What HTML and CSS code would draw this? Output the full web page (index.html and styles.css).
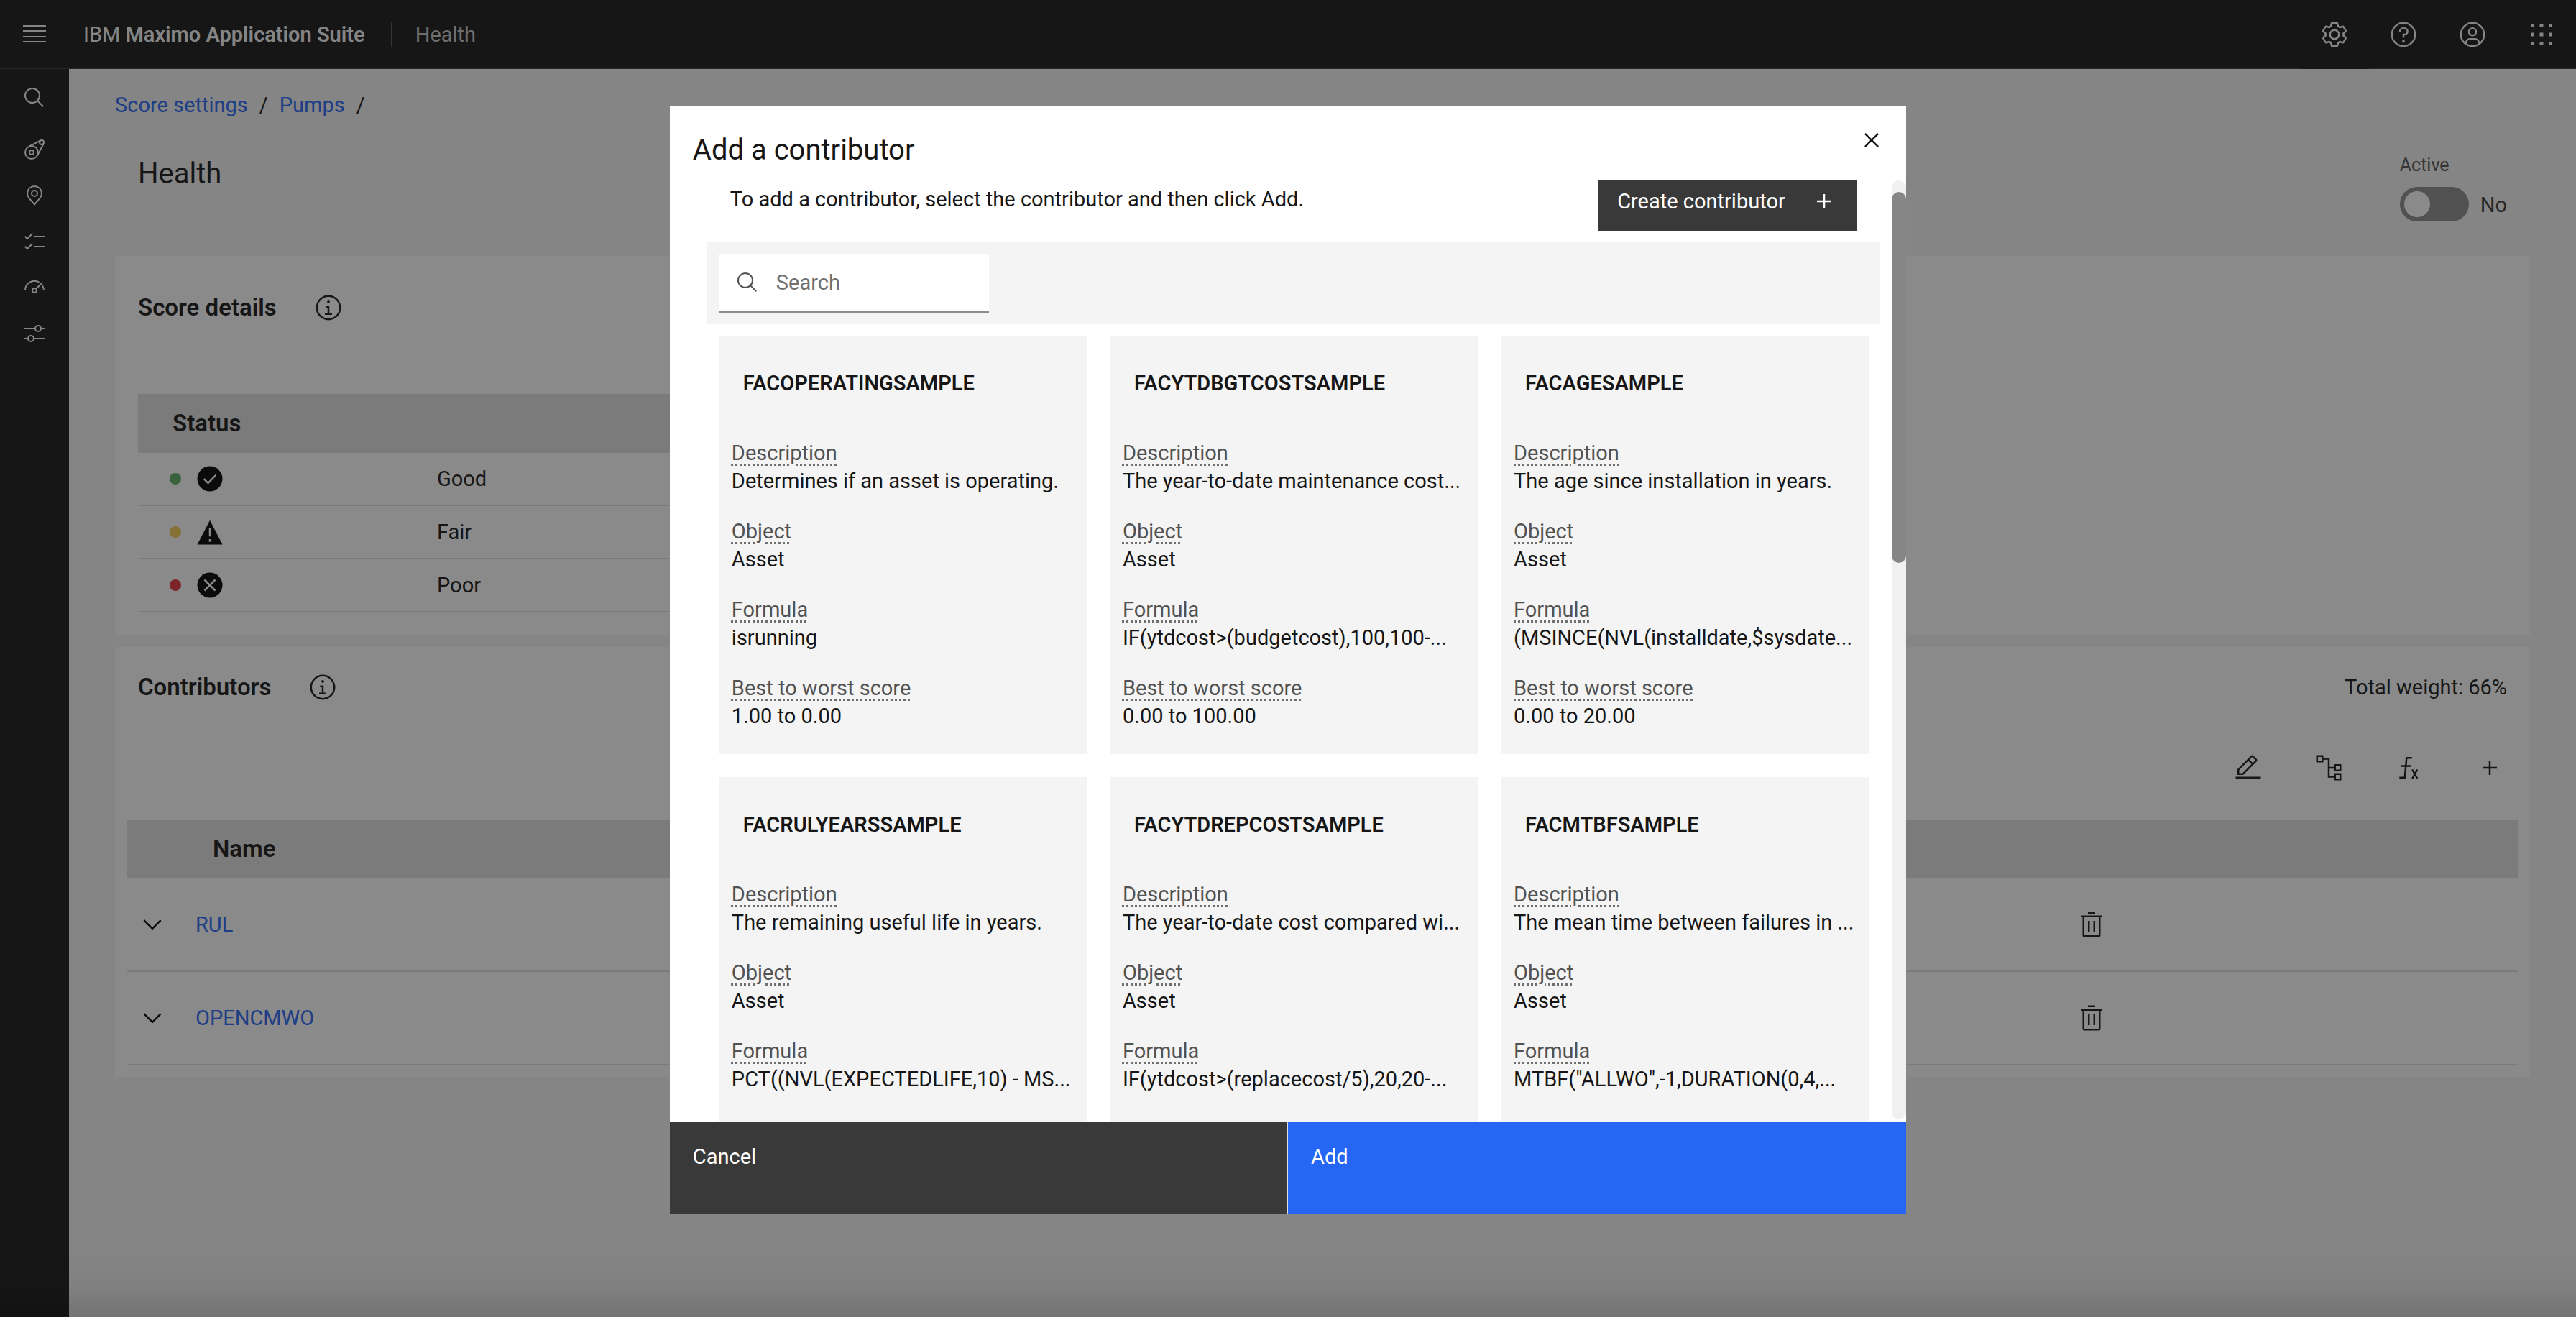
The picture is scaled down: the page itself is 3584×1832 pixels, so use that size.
FILE: index.html
```html
<!DOCTYPE html>
<html lang="en">
<head>
<meta charset="utf-8">
<meta name="viewport" content="width=device-width, initial-scale=1">
<title>Health - IBM Maximo Application Suite</title>
<link rel="stylesheet" href="styles.css">
</head>
<body>
<svg class="sprite" aria-hidden="true">
  <symbol id="i-search" viewBox="0 0 32 32"><path d="M29,27.586l-7.552-7.552a11.018,11.018,0,1,0-1.414,1.414L27.586,29ZM4,13a9,9,0,1,1,9,9A9.01,9.01,0,0,1,4,13Z"/></symbol>
  <symbol id="i-info" viewBox="0 0 32 32"><path d="M17,22V14H13v2h2v6H12v2h8V22ZM16,8a1.5,1.5,0,1,0,1.5,1.5A1.5,1.5,0,0,0,16,8Z"/><circle class="line" cx="16" cy="16" r="13"/></symbol>
  <symbol id="i-chevron" viewBox="0 0 32 32"><path d="M16,22L6,12l1.4-1.4L16,19.2l8.6-8.6L26,12Z"/></symbol>
  <symbol id="i-trash" viewBox="0 0 32 32"><path d="M12,12h2v12H12ZM18,12h2v12H18ZM4,6V8H6V28a2,2,0,0,0,2,2H24a2,2,0,0,0,2-2V8h2V6ZM8,28V8H24V28ZM12,2h8v2H12Z"/></symbol>
  <symbol id="i-add" viewBox="0 0 32 32"><path d="M17,15V8H15v7H8v2h7v7h2V17h7V15Z"/></symbol>
</svg>

<div class="app">
  <header class="topbar">
    <button class="icon-btn" type="button" aria-label="Menu">
      <svg class="ico-32" viewBox="0 0 32 32"><path d="M0,3h32v2H0ZM0,10h32v2H0ZM0,18h32v2H0ZM0,25h32v2H0Z"/></svg>
    </button>
    <a class="brand" href="#">IBM <strong>Maximo Application Suite</strong></a>
    <span class="divider"></span>
    <span class="product">Health</span>
    <div class="topbar-actions">
      <button class="icon-btn is-current" type="button" aria-label="Settings">
        <svg class="ico-40" viewBox="0 0 32 32"><path d="M27,16.76c0-.25,0-.5,0-.76s0-.51,0-.77l1.92-1.68A2,2,0,0,0,29.3,11L26.94,7a2,2,0,0,0-1.73-1,2,2,0,0,0-.64.1l-2.43.82a11.35,11.35,0,0,0-1.31-.75l-.51-2.52a2,2,0,0,0-2-1.61H13.64a2,2,0,0,0-2,1.61l-.51,2.52a11.48,11.48,0,0,0-1.32.75L7.43,6.06A2,2,0,0,0,6.79,6,2,2,0,0,0,5.06,7L2.7,11a2,2,0,0,0,.41,2.51L5,15.24c0,.25,0,.5,0,.76s0,.51,0,.77L3.11,18.45A2,2,0,0,0,2.7,21L5.06,25a2,2,0,0,0,1.73,1,2,2,0,0,0,.64-.1l2.43-.82a11.35,11.35,0,0,0,1.31.75l.51,2.52a2,2,0,0,0,2,1.61h4.72a2,2,0,0,0,2-1.61l.51-2.52a11.48,11.48,0,0,0,1.32-.75l2.42.82a2,2,0,0,0,.64.1,2,2,0,0,0,1.73-1L29.3,21a2,2,0,0,0-.41-2.51ZM25.21,24l-3.43-1.16a8.86,8.86,0,0,1-2.71,1.57L18.36,28H13.64l-.71-3.55a9.36,9.36,0,0,1-2.7-1.57L6.79,24,4.43,20l2.72-2.4a8.9,8.9,0,0,1,0-3.13L4.43,12,6.79,8l3.43,1.16a8.86,8.86,0,0,1,2.71-1.57L13.64,4h4.72l.71,3.55a9.36,9.36,0,0,1,2.7,1.57L25.21,8,27.57,12l-2.72,2.4a8.9,8.9,0,0,1,0,3.13L27.57,20Z"/><circle class="line" cx="16" cy="16" r="5"/></svg>
      </button>
      <button class="icon-btn" type="button" aria-label="Help">
        <svg class="ico-40" viewBox="0 0 32 32"><circle class="line" cx="16" cy="16" r="13"/><circle cx="16" cy="23.5" r="1.5"/><path d="M17,8H15.5A4.49,4.49,0,0,0,11,12.5V13h2v-.5A2.5,2.5,0,0,1,15.5,10H17a2.5,2.5,0,0,1,0,5H15v4.5h2V17a4.5,4.5,0,0,0,0-9Z"/></svg>
      </button>
      <button class="icon-btn" type="button" aria-label="User profile">
        <svg class="ico-40" viewBox="0 0 32 32"><circle class="line" cx="16" cy="16" r="13"/><circle class="line" cx="16" cy="13" r="4"/><path class="line" d="M9,26v-1a4,4,0,0,1,4-4h6a4,4,0,0,1,4,4v1"/></svg>
      </button>
      <button class="icon-btn" type="button" aria-label="App switcher">
        <svg class="ico-40" viewBox="0 0 32 32"><path d="M4,4h4v4H4ZM14,4h4v4h-4ZM24,4h4v4h-4ZM4,14h4v4H4ZM14,14h4v4h-4ZM24,14h4v4h-4ZM4,24h4v4H4ZM14,24h4v4h-4ZM24,24h4v4h-4Z"/></svg>
      </button>
    </div>
  </header>

  <div class="shell">
    <nav class="rail" aria-label="Main">
      <a href="#" class="rail-search" aria-label="Search"><svg class="ico-32"><use href="#i-search"/></svg></a>
      <a href="#" aria-label="Assets"><svg class="ico-32" viewBox="0 0 32 32"><g class="line"><circle cx="12" cy="20" r="9"/><circle cx="12" cy="20" r="3"/><circle cx="26" cy="6" r="3"/><path d="M8,12L24.5,3.4M20,24.2L28.8,7.5"/></g></svg></a>
      <a href="#" aria-label="Locations"><svg class="ico-32" viewBox="0 0 32 32"><circle class="line" cx="16" cy="13" r="4"/><path class="line" d="M16,28.4L8.3,19.3A10,10,0,1,1,23.7,19.3Z"/></svg></a>
      <a href="#" aria-label="Work queues"><svg class="ico-32" viewBox="0 0 32 32"><path class="line" d="M2.7,8.7L6,12L13.3,4.7M2.7,22.7L6,26L13.3,18.7M16,9H30M16,23H30"/></svg></a>
      <a href="#" aria-label="Dashboards"><svg class="ico-32" viewBox="0 0 32 32"><g class="line"><circle cx="16" cy="20" r="3"/><path d="M3,20A13,13,0,0,1,22.5,8.7M18.2,17.8L27.3,8.7M27,13.2A13,13,0,0,1,29,20"/></g></svg></a>
      <a href="#" aria-label="Score settings"><svg class="ico-32" viewBox="0 0 32 32"><g class="line"><circle cx="21" cy="9" r="4"/><circle cx="11" cy="23" r="4"/><path d="M2,9H17M25,9H30M2,23H7M15,23H30"/></g></svg></a>
    </nav>

    <main class="content">
      <nav class="crumbs" aria-label="Breadcrumb">
        <a href="#">Score settings</a><span>/</span><a href="#">Pumps</a><span>/</span>
      </nav>

      <div class="page-head">
        <h1>Health</h1>
        <div class="field">
          <label for="active">Active</label>
          <div class="toggle-row">
            <input class="toggle" type="checkbox" role="switch" id="active">
            <span>No</span>
          </div>
        </div>
      </div>

      <section class="panel score-panel">
        <div class="panel-head">
          <h2>Score details</h2>
          <button type="button" aria-label="About score details"><svg class="ico-40"><use href="#i-info"/></svg></button>
        </div>
        <table class="score-table">
          <thead><tr><th class="state">Status</th><th></th></tr></thead>
          <tbody>
            <tr>
              <td class="state"><div class="state-icons"><i class="dot dot-good"></i><svg class="ico-40" viewBox="0 0 32 32"><circle cx="16" cy="16" r="14"/><path class="mark" d="M9.3,16L14,20.8L22.7,11.8"/></svg></div></td>
              <td>Good</td>
            </tr>
            <tr>
              <td class="state"><div class="state-icons"><i class="dot dot-fair"></i><svg class="ico-40" viewBox="0 0 32 32"><path d="M16,3L30,30H2Z"/><path class="mark" d="M16,12V21M16,24v3"/></svg></div></td>
              <td>Fair</td>
            </tr>
            <tr>
              <td class="state"><div class="state-icons"><i class="dot dot-poor"></i><svg class="ico-40" viewBox="0 0 32 32"><circle cx="16" cy="16" r="14"/><path class="mark" d="M10,10L22,22M22,10L10,22"/></svg></div></td>
              <td>Poor</td>
            </tr>
          </tbody>
        </table>
      </section>

      <section class="panel contrib-panel">
        <div class="panel-head">
          <h2>Contributors</h2>
          <button type="button" aria-label="About contributors"><svg class="ico-40"><use href="#i-info"/></svg></button>
          <span class="total">Total weight: 66%</span>
        </div>
        <div class="tools">
          <button type="button" aria-label="Edit"><svg class="ico-40" viewBox="0 0 32 32"><path d="M2,26H30v2H2ZM25.4,9c.8-.8.8-2,0-2.8L21.8,2.6c-.8-.8-2-.8-2.8,0l-15,15V24h6.4Zm-5-5L24,7.6l-3,3L17.4,7ZM6,22V18.4l10-10L19.6,12l-10,10Z"/></svg></button>
          <button type="button" aria-label="Hierarchy"><svg class="ico-40" viewBox="0 0 32 32"><path class="line" d="M3,3h6v6H3ZM23,13h6v6h-6ZM23,23h6v6h-6ZM10,6h6v20h6M16,16h6"/></svg></button>
          <button type="button" aria-label="Formula"><svg class="ico-40" viewBox="0 0 32 32"><path class="line" d="M19,5H13L11,27H5M7,14H18M19.3,18L25,28M25,18L19.3,28"/></svg></button>
          <button type="button" aria-label="Add contributor"><svg class="ico-40"><use href="#i-add"/></svg></button>
        </div>
        <table class="contrib-table">
          <thead><tr><th class="col-toggle"></th><th class="col-name">Name</th><th class="col-action"></th></tr></thead>
          <tbody>
            <tr>
              <td class="col-toggle"><button type="button" aria-label="Expand RUL"><svg class="ico-40 ink"><use href="#i-chevron"/></svg></button></td>
              <td><a href="#">RUL</a></td>
              <td><button type="button" aria-label="Delete RUL"><svg class="ico-40"><use href="#i-trash"/></svg></button></td>
            </tr>
            <tr>
              <td class="col-toggle"><button type="button" aria-label="Expand OPENCMWO"><svg class="ico-40 ink"><use href="#i-chevron"/></svg></button></td>
              <td><a href="#">OPENCMWO</a></td>
              <td><button type="button" aria-label="Delete OPENCMWO"><svg class="ico-40"><use href="#i-trash"/></svg></button></td>
            </tr>
          </tbody>
        </table>
      </section>
    </main>
  </div>
</div>

<div class="overlay">
  <div class="modal" role="dialog" aria-modal="true" aria-labelledby="modal-title">
    <div class="modal-head">
      <h2 id="modal-title">Add a contributor</h2>
      <button class="icon-btn" type="button" aria-label="Close"><svg class="ico-40" viewBox="0 0 32 32"><path d="M24,9.4L22.6,8L16,14.6L9.4,8L8,9.4l6.6,6.6L8,22.6L9.4,24l6.6-6.6l6.6,6.6l1.4-1.4l-6.6-6.6L24,9.4Z"/></svg></button>
    </div>

    <div class="modal-body">
      <div class="modal-scroll">
        <div class="intro">
          <p>To add a contributor, select the contributor and then click Add.</p>
          <button class="create" type="button">Create contributor<svg class="ico-40"><use href="#i-add"/></svg></button>
        </div>
        <div class="filter">
          <label class="search" for="search"><svg class="ico-32"><use href="#i-search"/></svg><input id="search" type="search" placeholder="Search" aria-label="Search"></label>
        </div>
        <div class="cards">
          <article class="card">
            <h3>FACOPERATINGSAMPLE</h3>
            <dl>
              <div><dt>Description</dt><dd>Determines if an asset is operating.</dd></div>
              <div><dt>Object</dt><dd>Asset</dd></div>
              <div><dt>Formula</dt><dd>isrunning</dd></div>
              <div><dt>Best to worst score</dt><dd>1.00 to 0.00</dd></div>
            </dl>
          </article>
          <article class="card">
            <h3>FACYTDBGTCOSTSAMPLE</h3>
            <dl>
              <div><dt>Description</dt><dd>The year-to-date maintenance cost...</dd></div>
              <div><dt>Object</dt><dd>Asset</dd></div>
              <div><dt>Formula</dt><dd>IF(ytdcost&gt;(budgetcost),100,100-...</dd></div>
              <div><dt>Best to worst score</dt><dd>0.00 to 100.00</dd></div>
            </dl>
          </article>
          <article class="card">
            <h3>FACAGESAMPLE</h3>
            <dl>
              <div><dt>Description</dt><dd>The age since installation in years.</dd></div>
              <div><dt>Object</dt><dd>Asset</dd></div>
              <div><dt>Formula</dt><dd>(MSINCE(NVL(installdate,$sysdate...</dd></div>
              <div><dt>Best to worst score</dt><dd>0.00 to 20.00</dd></div>
            </dl>
          </article>
          <article class="card">
            <h3>FACRULYEARSSAMPLE</h3>
            <dl>
              <div><dt>Description</dt><dd>The remaining useful life in years.</dd></div>
              <div><dt>Object</dt><dd>Asset</dd></div>
              <div><dt>Formula</dt><dd>PCT((NVL(EXPECTEDLIFE,10) - MS...</dd></div>
            </dl>
          </article>
          <article class="card">
            <h3>FACYTDREPCOSTSAMPLE</h3>
            <dl>
              <div><dt>Description</dt><dd>The year-to-date cost compared wi...</dd></div>
              <div><dt>Object</dt><dd>Asset</dd></div>
              <div><dt>Formula</dt><dd>IF(ytdcost&gt;(replacecost/5),20,20-...</dd></div>
            </dl>
          </article>
          <article class="card">
            <h3>FACMTBFSAMPLE</h3>
            <dl>
              <div><dt>Description</dt><dd>The mean time between failures in ...</dd></div>
              <div><dt>Object</dt><dd>Asset</dd></div>
              <div><dt>Formula</dt><dd>MTBF("ALLWO",-1,DURATION(0,4,...</dd></div>
            </dl>
          </article>
        </div>
      </div>
      <div class="scrollbar"><div class="thumb"></div></div>
    </div>

    <div class="modal-foot">
      <button class="cancel" type="button">Cancel</button>
      <button class="add" type="button">Add</button>
    </div>
  </div>
</div>
</body>
</html>
```
FILE: styles.css
```css
* { box-sizing: border-box; }

body {
  margin: 0;
  background: #f4f4f4;
  color: #161616;
  font: 400 29px/36px Roboto, "Liberation Sans", sans-serif;
}

h1, h2, h3, p, dl, dd { margin: 0; }

a { color: #2666f5; text-decoration: none; }

button {
  margin: 0;
  padding: 0;
  border: 0;
  background: none;
  color: inherit;
  font: inherit;
  text-align: left;
}

svg { display: block; flex: none; fill: currentColor; }
.sprite { display: none; }
.ico-32 { width: 32px; height: 32px; }
.ico-40 { width: 40px; height: 40px; }
.line { fill: none; stroke: currentColor; stroke-width: 2; }
.mark { fill: none; stroke: #fff; stroke-width: 2; }
.ink { color: #000; }

.app { display: flex; flex-direction: column; min-height: 100vh; }

/* Top bar */
.topbar {
  display: flex;
  align-items: center;
  height: 96px;
  background: #161616;
  box-shadow: inset 0 -2px #393939;
  color: #f4f4f4;
}
.icon-btn {
  display: flex;
  align-items: center;
  justify-content: center;
  width: 96px;
  height: 96px;
}
.icon-btn.is-current { background: #161616; }
.brand { margin-left: 20px; color: #f4f4f4; }
.brand strong { font-weight: 600; }
.divider { width: 2px; height: 36px; margin: 0 32px 0 36px; background: #525252; }
.product { color: #c6c6c6; }
.topbar-actions { display: flex; margin-left: auto; }

/* Shell */
.shell { display: flex; flex: 1; }
.rail { flex: none; width: 96px; padding-top: 8px; background: #161616; }
.rail a {
  display: flex;
  align-items: center;
  justify-content: center;
  height: 64px;
  color: #f4f4f4;
}
.rail .rail-search { margin-bottom: 8px; }

.content { flex: 1; min-width: 0; padding: 32px 64px; }
.crumbs { display: flex; gap: 16px; }

.page-head {
  display: flex;
  justify-content: space-between;
  margin: 48px 0;
  padding: 0 32px;
}
.page-head h1 { padding-top: 6px; font-weight: 400; font-size: 40px; line-height: 48px; }
.field { display: flex; flex-direction: column; gap: 14px; }
.field label { padding-top: 2px; color: #525252; font-size: 25px; line-height: 32px; }
.toggle-row { display: flex; align-items: center; gap: 16px; color: #393939; }
.toggle-row span { padding-top: 2px; }
.toggle {
  appearance: none;
  display: block;
  width: 96px;
  height: 48px;
  margin: 0;
  padding: 6px;
  border-radius: 24px;
  background: #8d8d8d;
}
.toggle::before {
  content: "";
  display: block;
  width: 36px;
  height: 36px;
  border-radius: 50%;
  background: #fff;
}

/* Panels */
.panel { background: #fff; }
.panel + .panel { margin-top: 16px; }
.panel-head { display: flex; align-items: center; gap: 52px; }
.panel h2, th { font-weight: 600; font-size: 33px; line-height: 40px; }

table { border-collapse: separate; border-spacing: 0; table-layout: fixed; }
th { height: 82px; padding: 0; background: #e0e0e0; text-align: left; }
td { padding: 0; border-bottom: 2px solid #e0e0e0; }
td button { display: block; }

.score-panel { padding: 52px 32px 32px; }
.score-table { width: 50%; margin-top: 100px; }
.score-table td { height: 74px; }
.score-table .state { width: 416px; }
.score-table th.state { padding-left: 48px; }
.score-table td.state { padding-left: 44px; }
.state-icons { display: flex; align-items: center; gap: 20px; color: #000; }
.dot { width: 16px; height: 16px; border-radius: 50%; }
.dot-good { background: #5ab065; }
.dot-fair { background: #f7cf52; }
.dot-poor { background: #e0343c; }

.contrib-panel { padding: 36px 16px 16px; }
.contrib-panel .panel-head { padding: 0 16px; }
.total { margin-left: auto; }
.tools {
  display: flex;
  justify-content: flex-end;
  gap: 72px;
  margin: 72px 0 52px;
  padding-right: 20px;
}
.contrib-table { width: 100%; }
.contrib-table td { height: 130px; }
.contrib-table .col-toggle { width: 96px; padding-left: 16px; }
.contrib-table .col-name { padding-left: 24px; }
.contrib-table .col-action { width: 614px; }

/* Modal */
.overlay {
  position: fixed;
  inset: 0;
  display: flex;
  align-items: center;
  justify-content: center;
  padding-top: 4px;
  background:
    linear-gradient(to top, rgba(0, 0, 0, 0.13), rgba(0, 0, 0, 0.04) 40px, transparent 100px),
    rgba(22, 22, 22, 0.5);
}
.modal {
  display: flex;
  flex-direction: column;
  width: 48%;
  height: calc(100vh - 290px);
  background: #fff;
}
.modal-head { display: flex; justify-content: space-between; height: 104px; padding-left: 32px; }
.modal-head h2 { padding-top: 38px; font-weight: 400; font-size: 40px; line-height: 48px; }

.modal-body { display: flex; flex: 1; min-height: 0; gap: 16px; padding-left: 52px; }
.modal-scroll { flex: 1; min-width: 0; overflow: hidden; }
.scrollbar {
  width: 20px;
  margin-bottom: 4px;
  padding-top: 16px;
  border-radius: 10px;
  background: #f0f0f0;
}
.thumb { height: 40%; border-radius: 10px; background: #868686; }

.intro { display: flex; justify-content: space-between; padding: 0 32px; }
.intro p { padding-top: 8px; }
.create {
  display: flex;
  align-items: center;
  justify-content: space-between;
  width: 360px;
  height: 70px;
  padding: 0 26px 12px;
  background: #393939;
  color: #fff;
}

.filter { margin: 16px 0; padding: 16px; background: #f4f4f4; }
.search {
  display: flex;
  align-items: center;
  gap: 24px;
  width: 376px;
  height: 82px;
  padding: 0 24px;
  border-bottom: 2px solid #8d8d8d;
  background: #fff;
  color: #525252;
}
.search input {
  flex: 1;
  min-width: 0;
  padding: 0;
  border: 0;
  outline: 0;
  background: none;
  font: inherit;
}
.search input::placeholder { color: #6f6f6f; }

.cards { display: grid; grid-template-columns: repeat(3, 1fr); gap: 32px; padding: 0 16px; }
.card { min-width: 0; min-height: 582px; padding: 48px 18px 33px; background: #f4f4f4; }
.card h3 { margin-bottom: 60px; padding-left: 16px; font-weight: 600; font-size: 29px; line-height: 36px; }
.card dl { display: grid; gap: 31px; line-height: 39px; }
.card dt {
  color: #525252;
  text-decoration: underline dotted #6f6f6f 3px;
  text-underline-offset: 5px;
}
.card dd { overflow: hidden; text-overflow: ellipsis; white-space: nowrap; }

.modal-foot { display: grid; grid-template-columns: 1fr 1fr; height: 128px; }
.modal-foot button {
  display: flex;
  align-items: flex-start;
  padding: 30px 32px;
  color: #fff;
}
.cancel { border-right: 2px solid #e0e0e0; background: #393939; }
.add { background: #2666f5; }
```
